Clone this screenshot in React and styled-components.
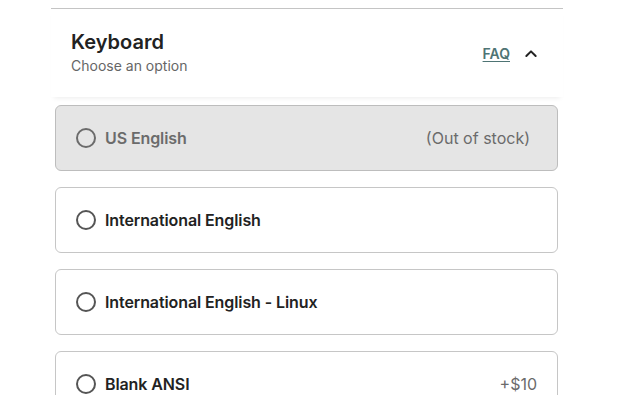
import React from 'react';
import styled, { createGlobalStyle } from 'styled-components';

const GlobalStyle = createGlobalStyle`
  body {
    margin: 0;
    background: #fff;
    font-family: Inter, "Liberation Sans", sans-serif;
  }
`;

const Page = styled.div`
  padding: 8px 0 0 51px;
  width: 512px;
`;

const Section = styled.section`
  border-top: 1px solid #c4c4c4;
`;

const Header = styled.div`
  display: flex;
  align-items: flex-start;
  justify-content: space-between;
  padding: 21px 24px 0 20px;
  height: 67px;
  box-shadow: 0 4px 5px -3px rgba(0, 0, 0, 0.08);
`;

const Title = styled.h2`
  margin: 0;
  font-size: 20px;
  font-weight: 600;
  color: #222;
  line-height: 24px;
`;

const Subtitle = styled.div`
  font-size: 14px;
  color: #666;
  margin-top: 2px;
  line-height: 20px;
`;

const Actions = styled.div`
  display: flex;
  align-items: center;
  gap: 13px;
  margin-top: 14px;
`;

const FaqLink = styled.a`
  font-size: 14px;
  font-weight: 600;
  color: #4e7474;
  line-height: 20px;
  text-decoration: underline;
  text-underline-offset: 2px;
`;

const List = styled.div`
  display: flex;
  flex-direction: column;
  gap: 16px;
  padding: 8px 5px 0 4px;
`;

const Option = styled.label`
  display: flex;
  align-items: center;
  height: 64px;
  padding: 0 27px 0 20px;
  border: 1px solid ${(p) => (p.$disabled ? '#bdbdbd' : '#c6c6c6')};
  border-radius: 6px;
  background: ${(p) => (p.$disabled ? '#e5e5e5' : '#fff')};
  color: ${(p) => (p.$disabled ? '#6b6b6b' : '#222')};
`;

const Radio = styled.span`
  width: 16px;
  height: 16px;
  border: 2px solid ${(p) => (p.$disabled ? '#6b6b6b' : '#555')};
  border-radius: 50%;
  margin-right: 9px;
  flex-shrink: 0;
`;

const Label = styled.span`
  font-size: 16px;
  font-weight: 600;
  letter-spacing: -0.1px;
  flex: 1;
`;

const Extra = styled.span`
  font-size: 16px;
  color: #6b6b6b;
  margin-right: ${(p) => p.$offset || 0}px;
`;

const options = [
  { label: 'US English', extra: '(Out of stock)', disabled: true },
  { label: 'International English' },
  { label: 'International English - Linux' },
  { label: 'Blank ANSI', extra: '+$10', offset: -7 },
];

const ChevronUp = () => (
  <svg width="16" height="16" viewBox="0 0 24 24" fill="none" stroke="#222" strokeWidth="3" strokeLinecap="round" strokeLinejoin="round">
    <polyline points="5 15 12 8 19 15" />
  </svg>
);

const App = () => (
  <Page>
    <GlobalStyle />
    <Section>
      <Header>
        <div>
          <Title>Keyboard</Title>
          <Subtitle>Choose an option</Subtitle>
        </div>
        <Actions>
          <FaqLink href="#">FAQ</FaqLink>
          <ChevronUp />
        </Actions>
      </Header>
      <List>
        {options.map((o) => (
          <Option key={o.label} $disabled={o.disabled}>
            <Radio $disabled={o.disabled} />
            <Label>{o.label}</Label>
            {o.extra && <Extra $offset={o.offset}>{o.extra}</Extra>}
          </Option>
        ))}
      </List>
    </Section>
  </Page>
);

export default App;
